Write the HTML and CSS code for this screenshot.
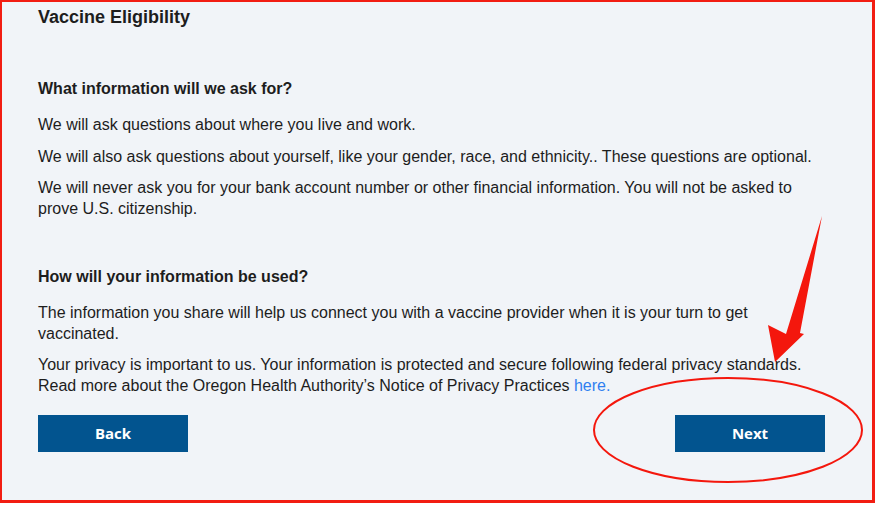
FILE: index.html
```html
<!DOCTYPE html>
<html lang="en">
<head>
<meta charset="utf-8">
<title>Vaccine Eligibility</title>
<link rel="stylesheet" href="styles.css">
</head>
<body>
<div class="frame">
  <main class="content">
    <h1 class="title">Vaccine Eligibility</h1>
    <section class="section first">
      <h2 class="heading">What information will we ask for?</h2>
      <p class="para">We will ask questions about where you live and work.</p>
      <p class="para">We will also ask questions about yourself, like your gender, race, and ethnicity.. These questions are optional.</p>
      <p class="para">We will never ask you for your bank account number or other financial information. You will not be asked to prove U.S. citizenship.</p>
    </section>
    <section class="section second">
      <h2 class="heading">How will your information be used?</h2>
      <p class="para">The information you share will help us connect you with a vaccine provider when it is your turn to get vaccinated.</p>
      <p class="para">Your privacy is important to us. Your information is protected and secure following federal privacy standards. Read more about the Oregon Health Authority’s Notice of Privacy Practices <a class="link" href="#">here.</a></p>
    </section>
    <div class="actions">
      <button class="btn" type="button">Back</button>
      <button class="btn" type="button">Next</button>
    </div>
  </main>
  <svg class="annot" width="877" height="505" viewBox="0 0 877 505" aria-hidden="true">
    <polygon points="822,216 800,333 804,334 775,362 768,325 786,334" fill="#f4170d"/>
    <ellipse cx="728" cy="430" rx="134" ry="52" fill="none" stroke="#f4170d" stroke-width="2"/>
  </svg>
</div>
</body>
</html>
```

FILE: styles.css
```css
html, body {
  margin: 0;
  padding: 0;
  background: #ffffff;
}

.frame {
  position: relative;
  width: 870px;
  height: 498px;
  border-style: solid;
  border-color: #f21d12;
  border-width: 2px 3px 3px 2px;
  background: #f1f4f8;
  overflow: hidden;
}

.content {
  display: flex;
  flex-direction: column;
  padding: 3px 50px 0 36px;
  font-family: "Liberation Sans", Arial, sans-serif;
  color: #1d1d1d;
}

.title {
  margin: 0;
  font-size: 18px;
  line-height: 24px;
  font-weight: bold;
}

.section {
  display: flex;
  flex-direction: column;
}

.section.first {
  margin-top: 49px;
}

.section.second {
  margin-top: 36px;
}

.heading {
  margin: 0 0 15px;
  font-size: 16px;
  line-height: 21px;
  font-weight: bold;
}

.para {
  margin: 0 0 10.5px;
  font-size: 16px;
  line-height: 21px;
}

.link {
  color: #2f7ff0;
  text-decoration: none;
}

.actions {
  display: flex;
  justify-content: space-between;
  margin-top: 8px;
  width: 787px;
}

.btn {
  width: 150px;
  height: 37px;
  border: none;
  background: #02548f;
  color: #ffffff;
  font-family: "Open Sans", "Liberation Sans", sans-serif;
  font-weight: bold;
  font-size: 15px;
  padding: 0;
}

.annot {
  position: absolute;
  left: -2px;
  top: -2px;
  pointer-events: none;
}
```
